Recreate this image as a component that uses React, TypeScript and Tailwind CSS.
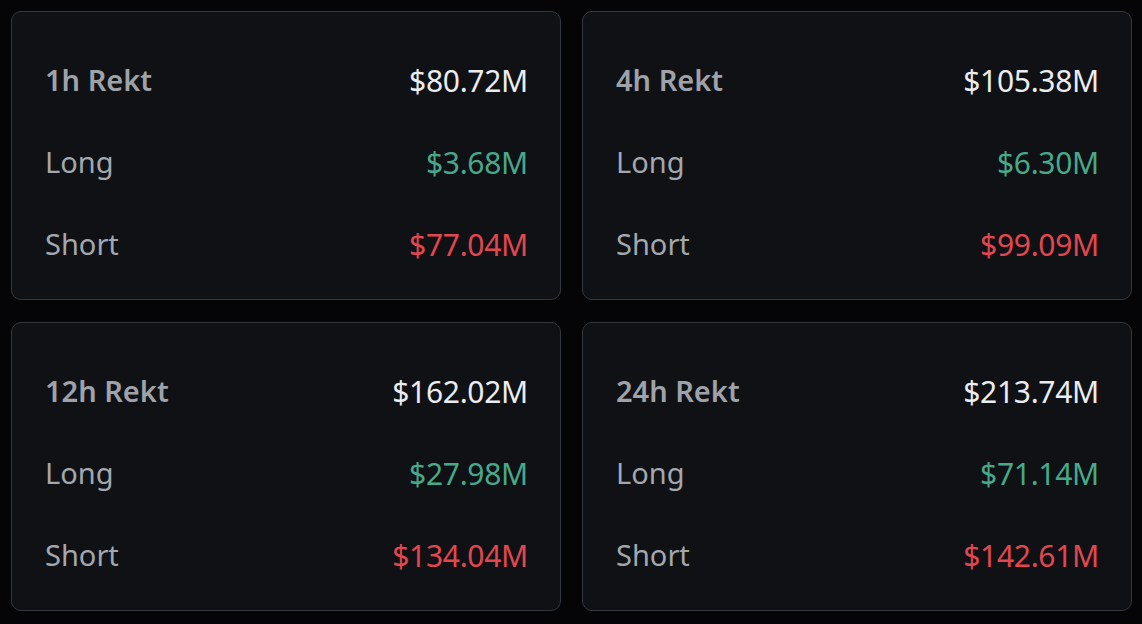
import React from "react";

type Card = { title: string; total: string; long: string; short: string };

const cards: Card[] = [
  { title: "1h Rekt", total: "$80.72M", long: "$3.68M", short: "$77.04M" },
  { title: "4h Rekt", total: "$105.38M", long: "$6.30M", short: "$99.09M" },
  { title: "12h Rekt", total: "$162.02M", long: "$27.98M", short: "$134.04M" },
  { title: "24h Rekt", total: "$213.74M", long: "$71.14M", short: "$142.61M" },
];

function Row({ label, value, labelClass, valueClass }: { label: string; value: string; labelClass: string; valueClass: string }) {
  return (
    <div className="flex h-[82px] items-center justify-between">
      <span className={labelClass}>{label}</span>
      <span className={valueClass}>{value}</span>
    </div>
  );
}

export default function App() {
  return (
    <div className="min-h-screen w-full bg-[#050507] p-[11px] pr-[10px]" style={{ fontFamily: '"Noto Sans", Inter, sans-serif' }}>
      <div className="grid grid-cols-2 gap-x-[21px] gap-y-[22px]">
        {cards.map((c) => (
          <div key={c.title} className="h-[289px] rounded-[10px] border border-[#34373d] bg-[#0f1115] pl-[33px] pr-[32px] pt-[27px] pb-[14px]">
            <Row label={c.title} value={c.total} labelClass="text-[29px] font-semibold text-[#9ea2a9]" valueClass="text-[30px] text-[#eaecef] tracking-[-0.3px]" />
            <Row label="Long" value={c.long} labelClass="text-[29px] text-[#a3a7ae]" valueClass="text-[30px] text-[#48a88a] tracking-[-0.3px]" />
            <Row label="Short" value={c.short} labelClass="text-[29px] text-[#a3a7ae]" valueClass="text-[30px] text-[#e2474f] tracking-[-0.3px]" />
          </div>
        ))}
      </div>
    </div>
  );
}
